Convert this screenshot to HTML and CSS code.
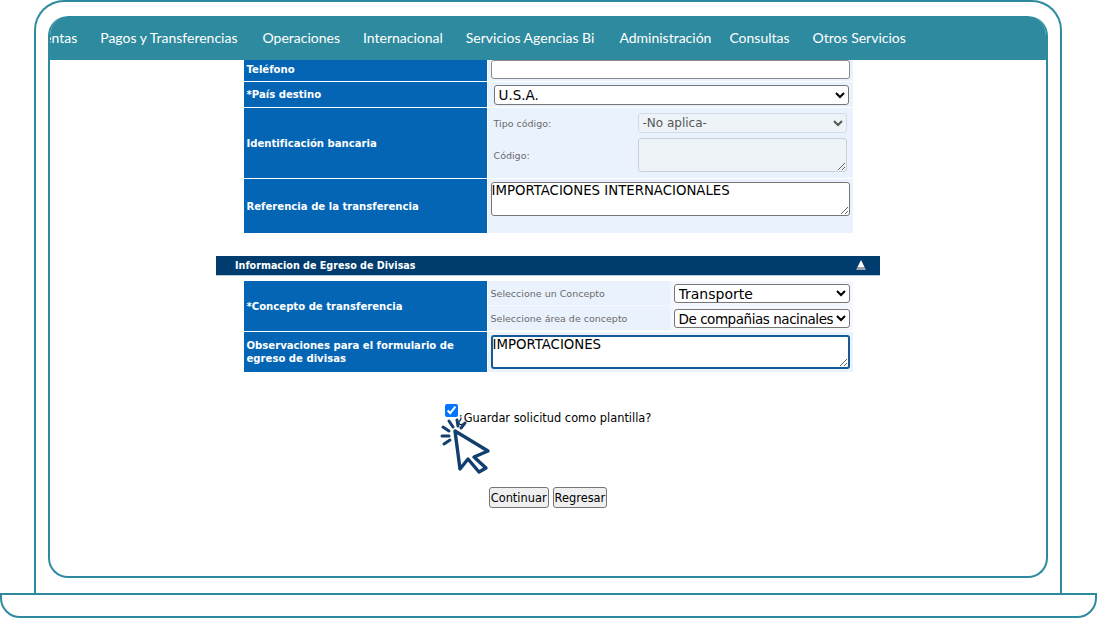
FILE: index.html
```html
<!DOCTYPE html>
<html lang="es">
<head>
  <meta charset="UTF-8" />
  <title>Transferencia al exterior</title>
  <link rel="stylesheet" href="styles.css">
</head>
<body>
  <div class="laptop">
    <div class="lid">
      <div class="screen">
        <nav class="menu">
          <a class="first">Cuentas</a>
          <a class="wide">Pagos y Transferencias</a>
          <a>Operaciones</a>
          <a>Internacional</a>
          <a class="wide">Servicios Agencias Bi</a>
          <a class="tight">Administración</a>
          <a>Consultas</a>
          <a>Otros Servicios</a>
        </nav>

        <div class="content">
          <div class="form-table">
            <div class="row row-tel">
              <div class="label">Teléfono</div>
              <div class="value tel-cell"><input type="text" class="field-tel"></div>
            </div>
            <div class="row row-pais">
              <div class="label">*País destino</div>
              <div class="value pais-cell">
                <select class="field-pais"><option>U.S.A.</option></select>
              </div>
            </div>
            <div class="row row-banco">
              <div class="label">Identificación bancaria</div>
              <div class="value banco-cell">
                <div class="sub-row">
                  <span class="sub-label">Tipo código:</span>
                  <select class="field-off" disabled><option>-No aplica-</option></select>
                </div>
                <div class="sub-row">
                  <span class="sub-label">Código:</span>
                  <textarea class="area-off" disabled></textarea>
                </div>
              </div>
            </div>
            <div class="row row-ref">
              <div class="label">Referencia de la transferencia</div>
              <div class="value ref-cell">
                <textarea class="area">IMPORTACIONES INTERNACIONALES</textarea>
              </div>
            </div>
          </div>

          <div class="section-bar">
            <span>Informacion de Egreso de Divisas</span>
            <i class="collapse"></i>
          </div>

          <div class="form-table">
            <div class="row row-concepto">
              <div class="label">*Concepto de transferencia</div>
              <div class="value concepto-cell">
                <div class="pick-row">
                  <span class="pick-label">Seleccione un Concepto</span>
                  <div class="pick-field"><select><option>Transporte</option></select></div>
                </div>
                <div class="pick-row">
                  <span class="pick-label">Seleccione área de concepto</span>
                  <div class="pick-field"><select class="long"><option>De compañias nacinales</option></select></div>
                </div>
              </div>
            </div>
            <div class="row row-obs">
              <div class="label">Observaciones para el formulario de egreso de divisas</div>
              <div class="value obs-cell">
                <textarea class="area area-focus">IMPORTACIONES</textarea>
              </div>
            </div>
          </div>

          <div class="template">
            <input type="checkbox" checked>
            <span>¿Guardar solicitud como plantilla?</span>
            <svg class="pointer" width="54" height="60" viewBox="0 0 54 60" fill="none" stroke="#123f6d">
              <path d="M17 16 L50 36 L36 42 L48 53 L41 57 L30 44 L22 54 Z" stroke-width="3.4" stroke-linejoin="round"/>
              <path d="M4 21H11M6 29L12 25M5 12L11 16M11 6L15 12M19 5L20 11M27 8L23 13" stroke-width="3" stroke-linecap="round"/>
            </svg>
          </div>

          <div class="actions">
            <button>Continuar</button>
            <button>Regresar</button>
          </div>
        </div>
      </div>
    </div>
    <div class="base"></div>
  </div>
</body>
</html>
```

FILE: styles.css
```css
* {
  box-sizing: border-box;
}
html, body {
  margin: 0;
  background: #fff;
}
body {
  width: 1097px;
  height: 618px;
  overflow: hidden;
  font-family: "DejaVu Sans", Verdana, sans-serif;
}

/* marco del portatil */
.lid {
  width: 1028px;
  height: 593px;
  margin-left: 34px;
  padding: 14px 12px 0 12px;
  border: 2px solid #2e8a9e;
  border-bottom: none;
  border-radius: 30px 30px 0 0;
}
.screen {
  height: 562px;
  border: 2px solid #2e8a9e;
  border-top: none;
  border-radius: 20px;
  overflow: hidden;
}
.base {
  height: 25px;
  border: 2px solid #2e8a9e;
  border-radius: 0 0 20px 20px;
}

/* menu */
.menu {
  display: flex;
  gap: 23px;
  height: 44px;
  margin: 0 -2px;
  padding-bottom: 1px;
  align-items: center;
  background: #2e8a9e;
  color: #fff;
  font-family: Lato, "Open Sans", sans-serif;
  font-size: 14px;
  white-space: nowrap;
  overflow: hidden;
  border-radius: 20px 20px 0 0;
}
.menu .first {
  margin-left: -21px;
}
.menu .wide {
  margin-right: 2px;
}
.menu .tight {
  margin-right: -5px;
}

/* formulario */
.content {
  position: relative;
}
.form-table {
  width: 609px;
  margin: 0 auto;
  display: flex;
  flex-direction: column;
  gap: 1px;
}
.row {
  display: flex;
  gap: 1px;
}
.label {
  width: 243px;
  flex: none;
  display: flex;
  align-items: center;
  padding: 0 3px;
  background: #0565b5;
  color: #fff;
  font-size: 10.1px;
  font-weight: bold;
  line-height: 13px;
}
.value {
  flex: 1;
  background: #eaf2fd;
}
.row-tel { height: 21px; }
.row-tel .label { padding-bottom: 2px; }
.row-pais { height: 25px; }
.row-banco { height: 70px; }
.row-ref { height: 54px; }
.row-concepto { height: 50px; }
.row-obs { height: 40px; }

input, textarea, select {
  font-family: "DejaVu Sans", Verdana, sans-serif;
  color: #000;
  background-color: #fff;
}
.field-tel {
  display: block;
  width: 359px;
  height: 19px;
  margin: 0 0 0 3px;
  border: 1px solid #8a8a8a;
  border-radius: 3px;
}
.pais-cell {
  padding: 3px 0 0 6px;
}
.field-pais {
  display: block;
  width: 355px;
  height: 20px;
  margin: 0;
  font-size: 13.5px;
  border: 1px solid #767676;
  border-radius: 3px;
}
.banco-cell {
  padding: 5px 6px 0 6px;
}
.sub-row {
  display: flex;
}
.sub-row + .sub-row {
  margin-top: 5px;
}
.sub-label {
  width: 144px;
  flex: none;
  padding-top: 5px;
  font-size: 9.5px;
  color: #6a6a6a;
}
.sub-row + .sub-row .sub-label {
  padding-top: 12px;
}
.field-off {
  width: 209px;
  height: 20px;
  margin: 0;
  padding: 0;
  font-size: 12px;
  border: 1px solid #d3dbe4;
  border-radius: 3px;
  background-color: #eef3f8;
  color: #555;
  opacity: 1;
}
.area-off {
  display: block;
  width: 209px;
  height: 34px;
  margin: 0;
  border: 1px solid #c9d0d8;
  border-radius: 3px;
  background: #eef3f8;
}
.ref-cell {
  padding: 3px 0 0 3px;
}
.obs-cell {
  padding: 3px 0 0 3px;
}
.area {
  display: block;
  width: 359px;
  height: 34px;
  margin: 0;
  padding: 0;
  font-size: 13.3px;
  line-height: 15px;
  border: 1px solid #767676;
  border-radius: 3px;
  overflow: hidden;
}
.area-focus {
  border: 2px solid #145a96;
}

/* barra de seccion */
.section-bar {
  display: flex;
  justify-content: space-between;
  align-items: center;
  width: 664px;
  height: 20px;
  margin: 23px auto 5px auto;
  padding: 0 14px 1px 19px;
  background: #003c6e;
  border-bottom: 1px solid #b3cde0;
  color: #fff;
  font-size: 9.6px;
  font-weight: bold;
}
.collapse {
  width: 10px;
  height: 10px;
  background: linear-gradient(#fff 70%, #9aa3ab 70%);
  clip-path: polygon(50% 0, 100% 100%, 0 100%);
}

.pick-row {
  display: flex;
  height: 25px;
  border-bottom: 1px solid #f4f8fe;
}
.pick-label {
  width: 182px;
  flex: none;
  padding: 7px 0 0 3px;
  font-size: 9.5px;
  color: #6a6a6a;
}
.pick-field {
  flex: 1;
  padding-top: 3px;
  background: #f4f8fe;
}
.pick-field select {
  display: block;
  width: 176px;
  height: 19px;
  margin: 0 0 0 4px;
  padding: 0;
  font-size: 14px;
  border: 1px solid #767676;
  border-radius: 3px;
}
.pick-field .long {
  font-size: 13.5px;
  letter-spacing: -0.45px;
}

/* plantilla y botones */
.template {
  position: relative;
  display: flex;
  justify-content: center;
  margin-top: 32px;
  font-size: 11.4px;
  color: #000;
}
.template input {
  margin: 0;
  width: 13px;
  height: 13px;
}
.template span {
  margin-top: 7px;
}
.pointer {
  position: absolute;
  left: 388px;
  top: 11px;
}
.actions {
  display: flex;
  justify-content: center;
  gap: 4px;
  margin-top: 62px;
}
.actions button {
  height: 21px;
  padding: 0 1px;
  font-family: "DejaVu Sans", Verdana, sans-serif;
  font-size: 11.4px;
  color: #000;
  background: #efefef;
  border: 1px solid #767676;
  border-radius: 3px;
}
```
